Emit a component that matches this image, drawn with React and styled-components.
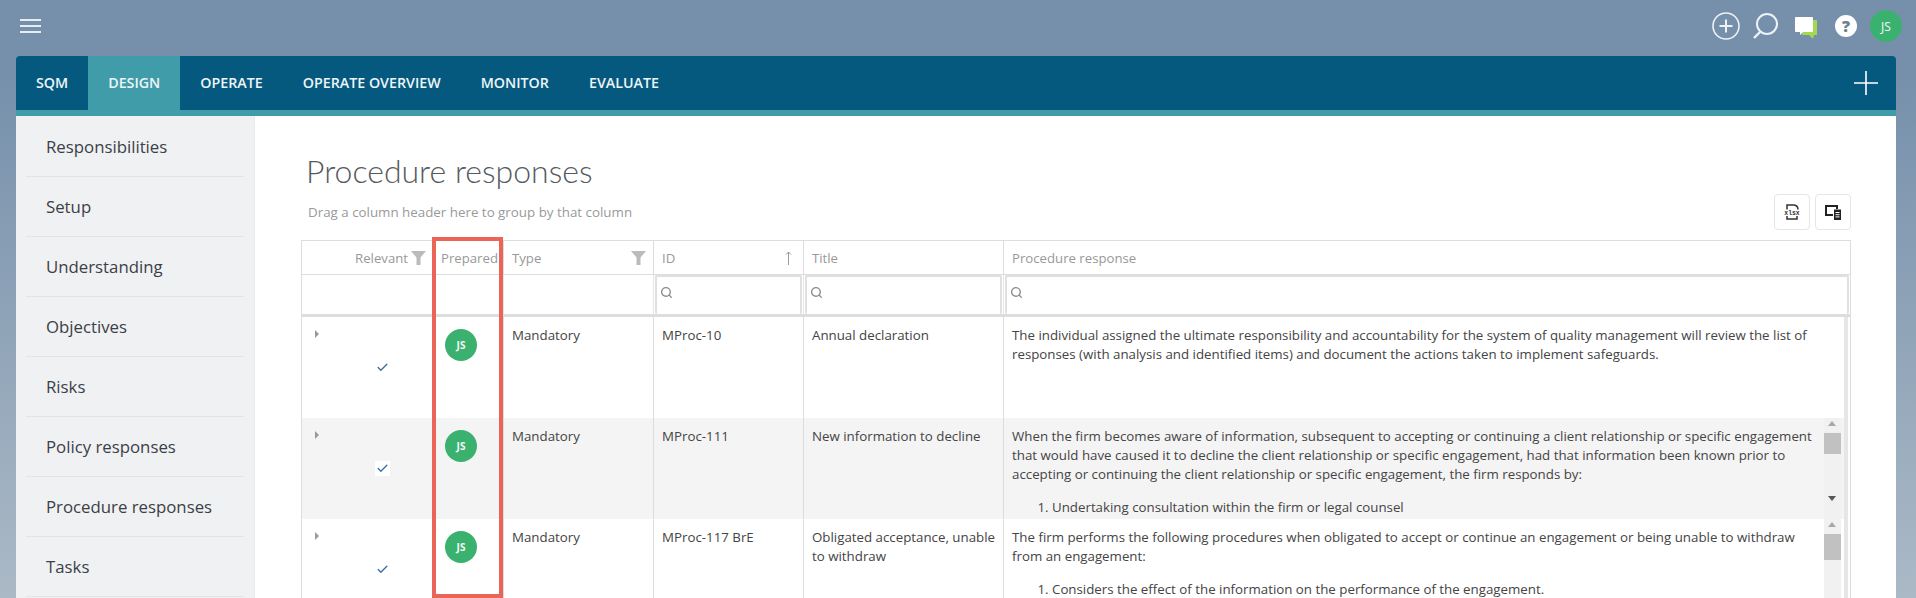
import React from 'react';
import styled, { createGlobalStyle } from 'styled-components';
import { Search, Check } from 'lucide-react';

const GlobalStyle = createGlobalStyle`
  html, body {
    margin: 0;
    height: 598px;
    overflow: hidden;
  }
  body {
    font-family: "Open Sans", "Noto Sans", sans-serif;
    background: linear-gradient(180deg, #7690ab 0%, #7690ab 12%, #abb9c6 100%);
  }
  * {
    box-sizing: border-box;
  }
`;

const COLUMNS = '132px 69px 150px 150px 200px 1fr';

const TopBar = styled.header`
  height: 56px;
  padding: 0 10px 4px 20px;
  display: flex;
  align-items: center;
  justify-content: space-between;
`;

const Burger = styled.button`
  width: 21px;
  height: 14px;
  padding: 0;
  border: 0;
  background: transparent;
  display: flex;
  flex-direction: column;
  justify-content: space-between;

  span {
    display: block;
    height: 2px;
    background: #e6edf3;
  }
`;

const IconBar = styled.div`
  display: flex;
  align-items: center;
`;

const IconSlot = styled.div`
  width: 40px;
  display: flex;
  align-items: center;
  justify-content: center;
`;

const HelpDot = styled.div`
  width: 22px;
  height: 22px;
  border-radius: 50%;
  background: #fff;
  color: #6f7f90;
  font-size: 16px;
  font-weight: 800;
  line-height: 22px;
  text-align: center;
`;

const Avatar = styled.div`
  width: ${p => p.$size}px;
  height: ${p => p.$size}px;
  border-radius: 50%;
  background: #3bb16f;
  color: #f4fbf7;
  font-size: ${p => p.$font}px;
  font-weight: ${p => p.$weight};
  display: flex;
  align-items: center;
  justify-content: center;
`;

const Shell = styled.div`
  margin: 0 20px 0 16px;
`;

const Tabs = styled.nav`
  height: 60px;
  padding-right: 18px;
  display: flex;
  align-items: flex-start;
  justify-content: space-between;
  background: #05597f;
  border-bottom: 6px solid #3f9ca8;
  border-radius: 4px 4px 0 0;
`;

const TabList = styled.div`
  display: flex;
`;

const Tab = styled.a`
  height: 54px;
  padding: 0 20px 2px;
  display: flex;
  align-items: center;
  color: #eef5f8;
  font-size: 14.25px;
  font-weight: 600;
  background: ${p => (p.$active ? '#3f9ca8' : 'transparent')};
`;

const AddTab = styled.div`
  height: 54px;
  display: flex;
  align-items: center;
`;

const Card = styled.div`
  height: 482px;
  display: flex;
  background: #fff;
  overflow: hidden;
`;

const Sidebar = styled.aside`
  width: 239px;
  flex: none;
  padding: 1px 10px 0;
  background: #f0f1f3;
  border-right: 1px solid #e8e9eb;
`;

const SideItem = styled.div`
  height: 60px;
  padding-left: 20px;
  display: flex;
  align-items: center;
  color: #3b4046;
  font-size: 16.8px;
  border-bottom: 1px solid #e3e4e6;
`;

const Main = styled.main`
  flex: 1;
  min-width: 0;
  padding: 34px 45px 0 46px;
`;

const Title = styled.h1`
  margin: 0;
  padding-left: 5px;
  color: #555a60;
  font-family: Lato, "Open Sans", sans-serif;
  font-size: 32px;
  font-weight: 300;
  line-height: 42px;
`;

const Toolbar = styled.div`
  height: 36px;
  margin: 2px 0 10px;
  display: flex;
  align-items: center;
  justify-content: space-between;
`;

const DragHint = styled.div`
  padding-left: 7px;
  color: #9a9a9a;
  font-size: 13.35px;
`;

const ToolButtons = styled.div`
  display: flex;
  gap: 5px;
`;

const ToolButton = styled.button`
  width: 36px;
  height: 36px;
  padding: 0;
  display: flex;
  align-items: center;
  justify-content: center;
  background: #fff;
  border: 1px solid #e6e6e6;
  border-radius: 4px;
`;

const GridWrap = styled.div`
  position: relative;
  border: 1px solid #ddd;
  border-bottom: 0;
`;

const HeaderRow = styled.div`
  height: 33px;
  display: grid;
  grid-template-columns: ${COLUMNS};
`;

const HeaderCell = styled.div`
  padding: 0 ${p => p.$right ?? 8}px 0 ${p => p.$left ?? 8}px;
  display: flex;
  align-items: center;
  gap: ${p => p.$gap ?? 0}px;
  justify-content: ${p => p.$justify || 'flex-start'};
  color: #999;
  font-size: 13.2px;
  border-left: ${p => (p.$first ? '0' : '1px solid #ddd')};
`;

const FilterRow = styled.div`
  height: 43px;
  display: grid;
  grid-template-columns: ${COLUMNS};
  border-top: 1px solid #ddd;
  border-bottom: 3px solid #ddd;
`;

const FilterCell = styled.div`
  padding: 0 1px;
  border-left: ${p => (p.$first ? '0' : '1px solid #e6e6e6')};
`;

const FilterBox = styled.label`
  height: 39px;
  padding: 0 0 6px 3px;
  display: flex;
  align-items: center;
  gap: 6px;
  background: #fff;
  border: 2px solid #e0e0e0;
  border-bottom: 0;
  border-radius: 2px;
`;

const FilterInput = styled.input`
  flex: 1;
  min-width: 0;
  border: 0;
  outline: 0;
  background: transparent;
`;

const Body = styled.div`
  margin-right: 2px;
  border-right: 4px solid #e6e6e6;
`;

const Row = styled.div`
  height: 101px;
  display: grid;
  grid-template-columns: ${COLUMNS};
  background: ${p => (p.$alt ? '#f4f4f4' : '#fff')};
  overflow: hidden;
`;

const Cell = styled.div`
  position: relative;
  padding: 9px 8px 0;
  color: #444;
  font-size: 13.3px;
  line-height: 19px;
  border-left: 1px solid #ddd;
  overflow: hidden;
`;

const RelevantCell = styled.div`
  display: flex;
  flex-direction: column;
`;

const Caret = styled.span`
  width: 0;
  height: 0;
  margin: 13px 0 0 13px;
  border-left: 4px solid #999;
  border-top: 4px solid transparent;
  border-bottom: 4px solid transparent;
`;

const CheckBox = styled.span`
  width: 15px;
  height: 15px;
  margin: 22px 0 0 73px;
  display: flex;
  align-items: center;
  justify-content: center;
  background: #fff;
  color: #3e6f9e;
`;

const AvatarCell = styled.div`
  padding: 12px 0 0 10px;
  border-left: 1px solid #ddd;
`;

const Para = styled.p`
  margin: 0 22px 14px 0;
`;

const List = styled.ol`
  margin: 0;
  padding-left: 40px;
`;

const Scroller = styled.div`
  position: absolute;
  top: 0;
  right: 3px;
  bottom: 0;
  width: 17px;
  background: #f1f1f1;
`;

const Arrow = styled.span`
  position: absolute;
  left: 4px;
  top: ${p => (p.$down ? '78px' : '3px')};
  border-left: 4px solid transparent;
  border-right: 4px solid transparent;
  border-top: ${p => (p.$down ? '5px solid #555' : '0')};
  border-bottom: ${p => (p.$down ? '0' : '5px solid #a8a8a8')};
`;

const Thumb = styled.span`
  position: absolute;
  left: 0;
  right: 0;
  top: 15px;
  height: ${p => p.$height}px;
  background: #c1c1c1;
`;

const Highlight = styled.div`
  position: absolute;
  top: -4px;
  left: 130px;
  width: 71px;
  height: 361px;
  border: 4px solid #ea6558;
  pointer-events: none;
`;

function PlusCircleIcon() {
  return (
    <svg width="28" height="28" viewBox="0 0 28 28" fill="none" stroke="#edf2f6" strokeWidth="2">
      <circle cx="14" cy="14" r="13" strokeWidth="1.6" />
      <path d="M14 7.5v13M7.5 14h13" />
    </svg>
  );
}

function SearchIcon() {
  return (
    <svg width="28" height="28" viewBox="0 0 28 28" fill="none" stroke="#edf2f6" strokeWidth="2">
      <circle cx="15" cy="12" r="10" />
      <path d="M8 20l-6 6" strokeWidth="2.4" />
    </svg>
  );
}

function ChatIcon() {
  return (
    <svg width="24" height="24" viewBox="0 0 24 24">
      <path d="M8 6h15v15h-3l-1 4-4-4H8z" fill="#a7d64f" />
      <path d="M2 3h16a1 1 0 0 1 1 1v13a1 1 0 0 1-1 1H9l-3 3v-3H2a1 1 0 0 1-1-1V4a1 1 0 0 1 1-1z" fill="#fff" />
    </svg>
  );
}

function FunnelIcon() {
  return (
    <svg width="15" height="14" viewBox="0 0 15 14">
      <path d="M0 0h15L9.5 6.5V14h-4V6.5z" fill="#bbb" />
    </svg>
  );
}

function SortIcon() {
  return (
    <svg width="7" height="14" viewBox="0 0 7 14" fill="none" stroke="#999" strokeWidth="1">
      <path d="M3.5 14V1M1 3.5L3.5 1 6 3.5" />
    </svg>
  );
}

function ExcelIcon() {
  return (
    <svg width="16" height="16" viewBox="0 0 16 16" fill="none" stroke="#333" strokeWidth="1.5">
      <path d="M3 5.5V1h7q4 .5 4 4.5M3 12v3h10v-3" />
      <text x="8" y="11" fontSize="6.4" fontWeight="700" fontFamily="Liberation Mono, monospace" fill="#333" stroke="none" textAnchor="middle">xlsx</text>
    </svg>
  );
}

function ColumnsIcon() {
  return (
    <svg width="16" height="15" viewBox="0 0 16 15">
      <path d="M1 1h11v9H1z" fill="none" stroke="#222" strokeWidth="2" />
      <path d="M8 4h8v11H8z" fill="#fff" />
      <path d="M9 4.5h7V15H9z" fill="#222" />
      <path d="M10.5 7.5h4M10.5 9.7h4M10.5 11.9h4" stroke="#fff" strokeWidth="1" />
    </svg>
  );
}

function TabPlusIcon() {
  return (
    <svg width="24" height="24" viewBox="0 0 24 24" stroke="#fff" strokeWidth="1.6">
      <path d="M12 0v24M0 12h24" />
    </svg>
  );
}

const sideItems = [
  'Responsibilities',
  'Setup',
  'Understanding',
  'Objectives',
  'Risks',
  'Policy responses',
  'Procedure responses',
  'Tasks',
];

const tabs = ['SQM', 'DESIGN', 'OPERATE', 'OPERATE OVERVIEW', 'MONITOR', 'EVALUATE'];

const rows = [
  {
    id: 'MProc-10',
    title: 'Annual declaration',
    text: 'The individual assigned the ultimate responsibility and accountability for the system of quality management will review the list of responses (with analysis and identified items) and document the actions taken to implement safeguards.',
  },
  {
    id: 'MProc-111',
    title: 'New information to decline',
    text: 'When the firm becomes aware of information, subsequent to accepting or continuing a client relationship or specific engagement that would have caused it to decline the client relationship or specific engagement, had that information been known prior to accepting or continuing the client relationship or specific engagement, the firm responds by:',
    item: 'Undertaking consultation within the firm or legal counsel',
    thumb: 21,
    down: true,
  },
  {
    id: 'MProc-117 BrE',
    title: 'Obligated acceptance, unable to withdraw',
    text: 'The firm performs the following procedures when obligated to accept or continue an engagement or being unable to withdraw from an engagement:',
    item: 'Considers the effect of the information on the performance of the engagement.',
    thumb: 26,
  },
];

function App() {
  return (
    <>
      <GlobalStyle />
      <TopBar>
        <Burger aria-label="Menu">
          <span />
          <span />
          <span />
        </Burger>
        <IconBar>
          <IconSlot><PlusCircleIcon /></IconSlot>
          <IconSlot><SearchIcon /></IconSlot>
          <IconSlot><ChatIcon /></IconSlot>
          <IconSlot><HelpDot>?</HelpDot></IconSlot>
          <IconSlot><Avatar $size={32} $font={12} $weight={400}>JS</Avatar></IconSlot>
        </IconBar>
      </TopBar>

      <Shell>
        <Tabs>
          <TabList>
            {tabs.map(t => (
              <Tab key={t} $active={t === 'DESIGN'}>{t}</Tab>
            ))}
          </TabList>
          <AddTab><TabPlusIcon /></AddTab>
        </Tabs>

        <Card>
          <Sidebar>
            {sideItems.map(s => (
              <SideItem key={s}>{s}</SideItem>
            ))}
          </Sidebar>

          <Main>
            <Title>Procedure responses</Title>
            <Toolbar>
              <DragHint>Drag a column header here to group by that column</DragHint>
              <ToolButtons>
                <ToolButton aria-label="Export"><ExcelIcon /></ToolButton>
                <ToolButton aria-label="Columns"><ColumnsIcon /></ToolButton>
              </ToolButtons>
            </Toolbar>

            <GridWrap>
              <HeaderRow>
                <HeaderCell $first $justify="flex-end" $gap={3}>Relevant <FunnelIcon /></HeaderCell>
                <HeaderCell $left={6} $right={0}>Prepared</HeaderCell>
                <HeaderCell $justify="space-between" $right={7}>Type <FunnelIcon /></HeaderCell>
                <HeaderCell $justify="space-between" $right={11}>ID <SortIcon /></HeaderCell>
                <HeaderCell>Title</HeaderCell>
                <HeaderCell>Procedure response</HeaderCell>
              </HeaderRow>

              <FilterRow>
                <FilterCell $first />
                <FilterCell />
                <FilterCell />
                {[0, 1, 2].map(i => (
                  <FilterCell key={i}>
                    <FilterBox>
                      <Search size={13} color="#8a8a8a" strokeWidth={2.5} />
                      <FilterInput />
                    </FilterBox>
                  </FilterCell>
                ))}
              </FilterRow>

              <Body>
                {rows.map((r, i) => (
                  <Row key={r.id} $alt={i === 1}>
                    <RelevantCell>
                      <Caret />
                      <CheckBox><Check size={13} strokeWidth={2.5} /></CheckBox>
                    </RelevantCell>
                    <AvatarCell>
                      <Avatar $size={32} $font={10} $weight={700}>JS</Avatar>
                    </AvatarCell>
                    <Cell>Mandatory</Cell>
                    <Cell>{r.id}</Cell>
                    <Cell>{r.title}</Cell>
                    <Cell>
                      <Para>{r.text}</Para>
                      {r.item && (
                        <List>
                          <li>{r.item}</li>
                        </List>
                      )}
                      {r.thumb && (
                        <Scroller>
                          <Arrow />
                          <Thumb $height={r.thumb} />
                          {r.down && <Arrow $down />}
                        </Scroller>
                      )}
                    </Cell>
                  </Row>
                ))}
              </Body>

              <Highlight />
            </GridWrap>
          </Main>
        </Card>
      </Shell>
    </>
  );
}

export default App;
